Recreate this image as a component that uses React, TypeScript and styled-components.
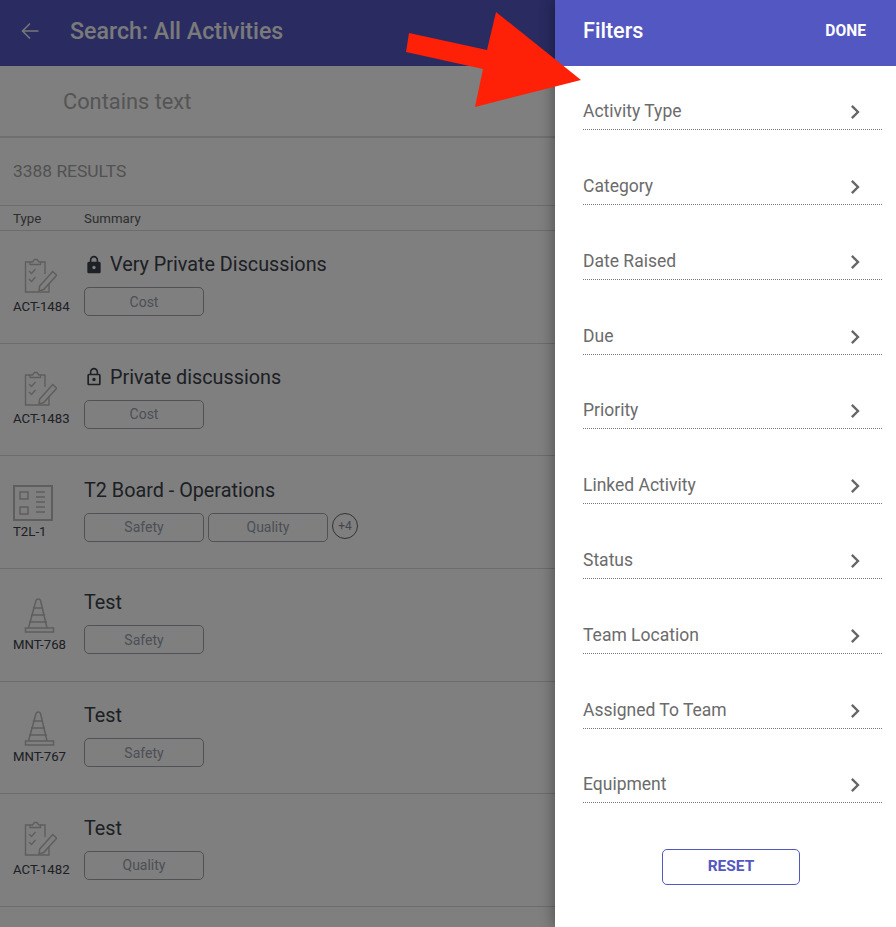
import React from "react";
import styled, { createGlobalStyle } from "styled-components";
import { MdChevronRight, MdLock, MdLockOutline } from "react-icons/md";

const Global = createGlobalStyle`
  html, body { margin: 0; padding: 0; background: #fff; }
  * { box-sizing: border-box; }
  body { font-family: Roboto, "Liberation Sans", sans-serif; }
`;

const Page = styled.div`
  position: relative;
  width: 896px;
  height: 927px;
  overflow: hidden;
  background: #fefefe;
`;
const AppBar = styled.header`
  height: 66px;
  background: #5357c2;
  color: #fff;
  display: flex;
  align-items: center;
  gap: 30px;
  padding: 0 20px 5px;
`;
const AppTitle = styled.h1`
  margin: 0;
  font-size: 23.2px;
  font-weight: 500;
  color: #f4f4f4;
`;
const SearchRow = styled.div`
  height: 72px;
  padding: 0 0 0 63px;
  display: flex;
  align-items: center;
  font-size: 21.8px;
  color: #aaaaaa;
  border-bottom: 2px solid #e0e0e0;
`;
const ResultsRow = styled.div`
  height: 68px;
  padding: 0 0 1px 13px;
  display: flex;
  align-items: center;
  font-size: 17.4px;
  color: #a4a4a4;
  border-bottom: 1px solid #d8d8d8;
`;
const ColumnHead = styled.div`
  height: 25px;
  display: grid;
  grid-template-columns: 71px 1fr;
  padding-left: 13px;
  align-items: center;
  font-size: 13.3px;
  color: #5c5c5c;
  border-bottom: 1px solid #d8d8d8;
`;
const Row = styled.div`
  height: 112.7px;
  display: grid;
  grid-template-columns: 71px 1fr;
  padding-left: 13px;
  border-bottom: 1px solid #d8d8d8;
`;
const TypeCell = styled.div`
  padding-top: 27px;
`;
const TypeIcon = styled.svg`
  display: block;
  width: 44px;
  height: 38px;
  fill: none;
  stroke: #bcbcbc;
  stroke-width: 2;
`;
const TypeCode = styled.div`
  margin-top: 0.6px;
  font-size: 13.2px;
  line-height: 20px;
  color: #3a4048;
`;
const SummaryCell = styled.div`
  padding-top: 20.7px;
`;
const Title = styled.div`
  height: 26px;
  display: flex;
  align-items: center;
  gap: 6px;
  font-size: 19.8px;
  color: #3a4048;
  svg { display: block; }
`;
const Chips = styled.div`
  margin-top: 9.6px;
  display: flex;
  align-items: flex-start;
  gap: 4px;
`;
const Chip = styled.div`
  width: 120px;
  height: 29px;
  display: flex;
  align-items: center;
  justify-content: center;
  border: 1px solid #a0a4ac;
  border-radius: 5px;
  font-size: 14px;
  color: #98a0ac;
`;
const More = styled.div`
  width: 26px;
  height: 26px;
  display: flex;
  align-items: center;
  justify-content: center;
  border: 1px solid #666;
  border-radius: 50%;
  font-size: 12px;
  color: #8a8f98;
`;
const Scrim = styled.div`
  position: absolute;
  inset: 0;
  background: rgba(0, 0, 0, 0.5);
`;
const Drawer = styled.aside`
  position: absolute;
  top: 0;
  right: 0;
  bottom: 0;
  width: 341px;
  background: #fff;
  box-shadow: -3px 0 12px rgba(0, 0, 0, 0.3);
  display: flex;
  flex-direction: column;
`;
const DrawerBar = styled.div`
  height: 66px;
  flex: none;
  background: #5357c2;
  color: #fff;
  display: flex;
  align-items: center;
  justify-content: space-between;
  padding: 0 30px 5px 28px;
`;
const DrawerTitle = styled.h2`
  margin: 0;
  font-size: 21.6px;
  font-weight: 500;
`;
const Done = styled.span`
  font-size: 15.6px;
  font-weight: 700;
`;
const FilterList = styled.div`
  padding: 28.2px 14px 0 28px;
  display: flex;
  flex-direction: column;
  gap: 38.8px;
`;
const FilterRow = styled.div`
  height: 36px;
  display: flex;
  align-items: center;
  justify-content: space-between;
  padding: 0 13px 1px 0;
  border-bottom: 1px dotted #777;
  font-size: 17.5px;
  color: #6b6b6b;
  svg { display: block; color: #666; margin-top: 2px; }
`;
const Reset = styled.button`
  align-self: flex-start;
  margin: 45.8px 0 0 107px;
  width: 138px;
  height: 36px;
  padding: 0 0 2px;
  background: #fff;
  border: 1px solid #5357c2;
  border-radius: 5px;
  color: #5357c2;
  font-family: inherit;
  font-size: 15.5px;
  font-weight: 700;
`;
const Arrow = styled.svg`
  position: absolute;
  left: 0;
  top: 0;
  width: 896px;
  height: 927px;
  pointer-events: none;
`;

const Clipboard = () => (
  <TypeIcon viewBox="0 0 44 38">
    <path d="M17 4h-4.500v30h23.500V25M32 16V4h-4.500" strokeWidth="1.400" />
    <path d="M17 6.500V4h2.500l2-2.500 2.500 0 2 2.500h1.500v2.500z" strokeWidth="1.300" />
    <path d="M16 13l2.500 2.500 4-4.500M16 21l2.500 2.500 4-4.500" strokeWidth="1.300" />
    <path d="M26 33l.7-5 13-14.500 4 3.800-13 14.200z" strokeWidth="1.500" />
  </TypeIcon>
);
const Board = () => (
  <TypeIcon viewBox="0 0 44 38">
    <rect x="1" y="3" width="38" height="34" strokeWidth="2" />
    <rect x="7" y="9" width="8" height="7" strokeWidth="1.500" />
    <rect x="7" y="24" width="8" height="7" strokeWidth="1.500" />
    <path d="M23 9h9M23 14h9M23 19h9M23 24h9M23 29h9" strokeWidth="1.500" />
  </TypeIcon>
);
const Cone = () => (
  <TypeIcon viewBox="0 0 44 38">
    <path d="M15.500 32L23 4.500c.5-2 4-2 4.500 0L34 32" strokeWidth="1.500" />
    <path d="M19.800 12h10.400M18 19h14M16 26h18" strokeWidth="1.500" />
    <rect x="12.500" y="32" width="28" height="4" strokeWidth="1.500" />
  </TypeIcon>
);

const rows = [
  { icon: <Clipboard />, code: "ACT-1484", title: "Very Private Discussions", lock: <MdLock size={20} />, chips: ["Cost"] },
  { icon: <Clipboard />, code: "ACT-1483", title: "Private discussions", lock: <MdLockOutline size={20} />, chips: ["Cost"] },
  { icon: <Board />, code: "T2L-1", title: "T2 Board - Operations", chips: ["Safety", "Quality"], more: "+4" },
  { icon: <Cone />, code: "MNT-768", title: "Test", chips: ["Safety"] },
  { icon: <Cone />, code: "MNT-767", title: "Test", chips: ["Safety"] },
  { icon: <Clipboard />, code: "ACT-1482", title: "Test", chips: ["Quality"] },
];

const filters = [
  "Activity Type", "Category", "Date Raised", "Due", "Priority",
  "Linked Activity", "Status", "Team Location", "Assigned To Team", "Equipment",
];

export default function App() {
  return (
    <Page>
      <Global />
      <AppBar>
        <svg width="20" height="20" viewBox="0 0 20 20" fill="none" stroke="#f0f0f0" strokeWidth="1.500">
          <path d="M18.500 10H2.500M10 2.500L2.500 10l7.500 7.500" />
        </svg>
        <AppTitle>Search: All Activities</AppTitle>
      </AppBar>
      <SearchRow>Contains text</SearchRow>
      <ResultsRow>3388 RESULTS</ResultsRow>
      <ColumnHead>
        <span>Type</span>
        <span>Summary</span>
      </ColumnHead>
      {rows.map((r) => (
        <Row key={r.code}>
          <TypeCell>
            {r.icon}
            <TypeCode>{r.code}</TypeCode>
          </TypeCell>
          <SummaryCell>
            <Title>
              {r.lock}
              {r.title}
            </Title>
            <Chips>
              {r.chips.map((c) => (
                <Chip key={c}>{c}</Chip>
              ))}
              {r.more && <More>{r.more}</More>}
            </Chips>
          </SummaryCell>
        </Row>
      ))}
      <Scrim />
      <Drawer>
        <DrawerBar>
          <DrawerTitle>Filters</DrawerTitle>
          <Done>DONE</Done>
        </DrawerBar>
        <FilterList>
          {filters.map((f) => (
            <FilterRow key={f}>
              {f}
              <MdChevronRight size={28} />
            </FilterRow>
          ))}
        </FilterList>
        <Reset>RESET</Reset>
      </Drawer>
      <Arrow viewBox="0 0 896 927">
        <polygon points="406,52 409,33 487,50 496,12 581,80 475,107 483,69" fill="#ff2008" />
      </Arrow>
    </Page>
  );
}
